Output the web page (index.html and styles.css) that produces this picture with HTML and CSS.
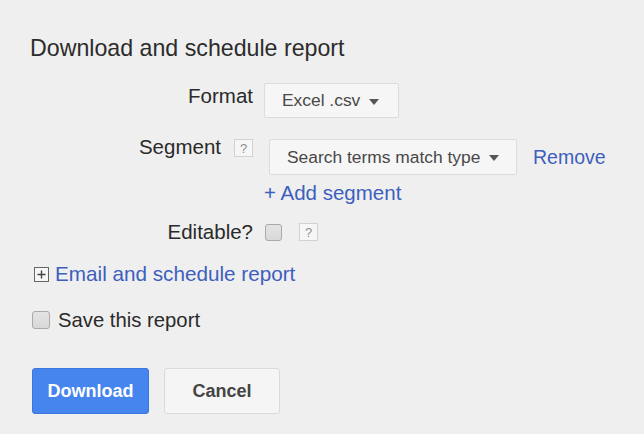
FILE: index.html
```html
<!DOCTYPE html>
<html>
<head>
<meta charset="utf-8">
<link rel="stylesheet" href="styles.css">
</head>
<body>
<div class="panel">
  <h1 class="title">Download and schedule report</h1>
  <div class="row row-format">
    <div class="label">Format</div>
    <div class="control">
      <button class="dropdown dd-format">Excel .csv<span class="caret"></span></button>
    </div>
  </div>
  <div class="row row-segment">
    <div class="label">Segment<span class="help">?</span></div>
    <div class="control">
      <button class="dropdown dd-segment">Search terms match type<span class="caret"></span></button>
      <a class="link remove">Remove</a>
    </div>
  </div>
  <div class="row row-add">
    <div class="label"></div>
    <div class="control"><a class="link">+ Add segment</a></div>
  </div>
  <div class="row row-edit">
    <div class="label">Editable?</div>
    <div class="control">
      <span class="checkbox"></span>
      <span class="help help-edit">?</span>
    </div>
  </div>
  <div class="email">
    <span class="plusbox"><svg width="13" height="13" viewBox="0 0 13 13"><path d="M6.5 2.5v8M2.5 6.5h8" stroke="#444" stroke-width="1.4"/></svg></span>
    <a class="link">Email and schedule report</a>
  </div>
  <div class="save">
    <span class="checkbox"></span>
    <span>Save this report</span>
  </div>
  <div class="buttons">
    <button class="btn btn-primary">Download</button>
    <button class="btn btn-default">Cancel</button>
  </div>
</div>
</body>
</html>
```
FILE: styles.css
```css
html, body {
  margin: 0;
  padding: 0;
  background: #efefef;
}
body {
  font-family: "Liberation Sans", Arial, sans-serif;
  color: #2a2a2a;
  width: 644px;
  height: 434px;
  overflow: hidden;
}
.panel {
  padding: 34px 0 0 30px;
}
.title {
  margin: 0;
  font-weight: normal;
  font-size: 23.2px;
  line-height: 28px;
  color: #2c2c2c;
}
.row {
  display: flex;
  align-items: flex-start;
  gap: 11px;
  font-size: 20.5px;
}
.label {
  width: 223px;
  text-align: right;
  display: flex;
  justify-content: flex-end;
  align-items: flex-start;
  line-height: 24px;
}
.control {
  display: flex;
  align-items: center;
}
.row-format { margin-top: 21px; }
.row-format .label { padding-top: 1px; }
.row-segment { margin-top: 21px; }
.row-segment .label { margin-top: -4px; }
.row-segment .control { margin-left: 5px; }
.row-add { margin-top: 6px; }
.row-add .control { line-height: 24px; }
.row-edit { margin-top: 15px; }
.row-edit .control { height: 24px; }

.dropdown {
  font-family: "Liberation Sans", Arial, sans-serif;
  font-size: 17.4px;
  color: #484848;
  background: #f6f6f6;
  border: 1px solid #dcdcdc;
  border-radius: 2px;
  display: flex;
  align-items: center;
  padding: 0 16px 0 17px;
  margin: 0;
}
.dd-format { width: 135px; height: 35px; }
.dd-segment { width: 248px; height: 36px; padding-left: 17px; }
.caret {
  display: inline-block;
  width: 0;
  height: 0;
  border-left: 5.5px solid transparent;
  border-right: 5.5px solid transparent;
  border-top: 6px solid #555;
  margin-left: 9px;
  margin-top: 2px;
}
.link {
  color: #3d5fbe;
  text-decoration: none;
  cursor: pointer;
}
.remove {
  margin-left: 16px;
  font-size: 19.5px;
}
.help {
  display: inline-flex;
  align-items: center;
  justify-content: center;
  width: 19px;
  height: 18px;
  box-sizing: border-box;
  border: 1px solid #d2d2d2;
  background: #f6f6f6;
  color: #8f8f8f;
  font-size: 13px;
  line-height: 1;
  margin-left: 13px;
  margin-top: 4px;
}
.help-edit { margin-left: 17px; margin-top: 0; }
.checkbox {
  display: inline-block;
  width: 17px;
  height: 17px;
  box-sizing: border-box;
  border: 1px solid #a9a9a9;
  border-radius: 3px;
  background: linear-gradient(#e4e4e4, #d8d8d8);
}
.row-edit .checkbox { margin-left: 1px; }

.email {
  display: flex;
  align-items: center;
  margin-top: 17px;
  margin-left: 4px;
  font-size: 20.7px;
  line-height: 26px;
}
.plusbox {
  display: inline-flex;
  width: 15px;
  height: 15px;
  box-sizing: border-box;
  border: 1px solid #666;
  background: #f6f6f6;
  align-items: center;
  justify-content: center;
  margin-right: 6px;
}
.plusbox svg { display: block; }
.save {
  display: flex;
  align-items: center;
  gap: 8px;
  margin-top: 20px;
  margin-left: 2px;
  font-size: 20.3px;
  line-height: 26px;
}
.save .checkbox { width: 18px; height: 18px; }
.buttons {
  display: flex;
  gap: 15px;
  margin-top: 35px;
  margin-left: 2px;
}
.btn {
  font-family: "Liberation Sans", Arial, sans-serif;
  font-size: 18px;
  font-weight: bold;
  height: 46px;
  border-radius: 3px;
  margin: 0;
  padding: 0;
}
.btn-primary {
  width: 117px;
  background: #4684ee;
  border: 1px solid #3b76dc;
  color: #fff;
}
.btn-default {
  width: 116px;
  background: #f5f5f5;
  border: 1px solid #dadada;
  color: #444;
}
```
